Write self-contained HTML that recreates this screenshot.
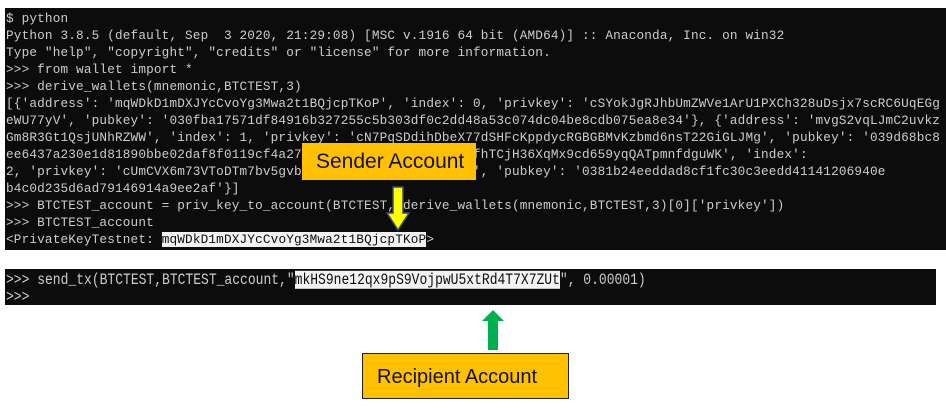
<!DOCTYPE html>
<html><head><style>
body{margin:0;width:946px;height:411px;background:#fff;position:relative;overflow:hidden;font-family:"Liberation Mono",monospace}
.t1{position:absolute;left:5px;top:8px;width:941px;height:242px;background:#0c0c0c}
.ln{position:absolute;left:6px;white-space:pre;color:#cccccc;font-size:12.7px;line-height:17px;letter-spacing:0.17px}
.hl{background:#f2f2f2;color:#0c0c0c}
.t2{position:absolute;left:5px;top:269px;width:931px;height:36px;background:#0c0c0c}
.l2{position:absolute;left:6px;white-space:pre;color:#cccccc;font-size:13px;line-height:14px;transform:scaleY(1.2);transform-origin:0 0}
.box{position:absolute;background:#ffc000;border:1px solid #222;font-family:"Liberation Sans",sans-serif;color:#111}
</style></head><body>
<div class="t1"></div>
<div class="ln" style="top:10px">$ python
Python 3.8.5 (default, Sep  3 2020, 21:29:08) [MSC v.1916 64 bit (AMD64)] :: Anaconda, Inc. on win32
Type "help", "copyright", "credits" or "license" for more information.
&gt;&gt;&gt; from wallet import *
&gt;&gt;&gt; derive_wallets(mnemonic,BTCTEST,3)
[{'address': 'mqWDkD1mDXJYcCvoYg3Mwa2t1BQjcpTKoP', 'index': 0, 'privkey': 'cSYokJgRJhbUmZWVe1ArU1PXCh328uDsjx7scRC6UqEGg
eWU77yV', 'pubkey': '030fba17571df84916b327255c5b303df0c2dd48a53c074dc04be8cdb075ea8e34'}, {'address': 'mvgS2vqLJmC2uvkz
Gm8R3Gt1QsjUNhRZWW', 'index': 1, 'privkey': 'cN7PqSDdihDbeX77dSHFcKppdycRGBGBMvKzbmd6nsT22GiGLJMg', 'pubkey': '039d68bc8
ee6437a230e1d81890bbe02daf8f0119cf4a27fe1c8, {'address': 'mxfhTCjH36XqMx9cd659yqQATpmnfdguWK', 'index':
2, 'privkey': 'cUmCVX6m73VToDTm7bv5gvbxxxxxxxxxxxxxxxHs4VhSK', 'pubkey': '0381b24eeddad8cf1fc30c3eedd41141206940e
b4c0d235d6ad79146914a9ee2af'}]
&gt;&gt;&gt; BTCTEST_account = priv_key_to_account(BTCTEST, derive_wallets(mnemonic,BTCTEST,3)[0]['privkey'])
&gt;&gt;&gt; BTCTEST_account
&lt;PrivateKeyTestnet: <span class="hl">mqWDkD1mDXJYcCvoYg3Mwa2t1BQjcpTKoP</span>&gt;</div>
<div class="box" style="left:302px;top:143px;width:174px;height:37px;border:none;font-size:21px;line-height:37px;padding-left:14px;box-sizing:border-box">Sender Account</div>
<svg style="position:absolute;left:385px;top:186px" width="26" height="46"><path d="M8 1h10v26h6L13 44 2 27h6z" fill="#ffff00" stroke="#3a4a7a" stroke-width="1.5"/></svg>
<div class="t2"></div>
<div class="l2" style="top:272px">&gt;&gt;&gt; send_tx(BTCTEST,BTCTEST_account,"<span class="hl">mkHS9ne12qx9pS9VojpwU5xtRd4T7X7ZUt</span>", 0.00001)
&gt;&gt;&gt;</div>
<svg style="position:absolute;left:481px;top:309px" width="24" height="42"><path d="M7 41V12H1L12 1l11 11h-6v29z" fill="#00b050"/></svg>
<div class="box" style="left:362px;top:353px;width:207px;height:46px;font-size:20px;line-height:46px;padding-left:14px;box-sizing:border-box">Recipient Account</div>
</body></html>
